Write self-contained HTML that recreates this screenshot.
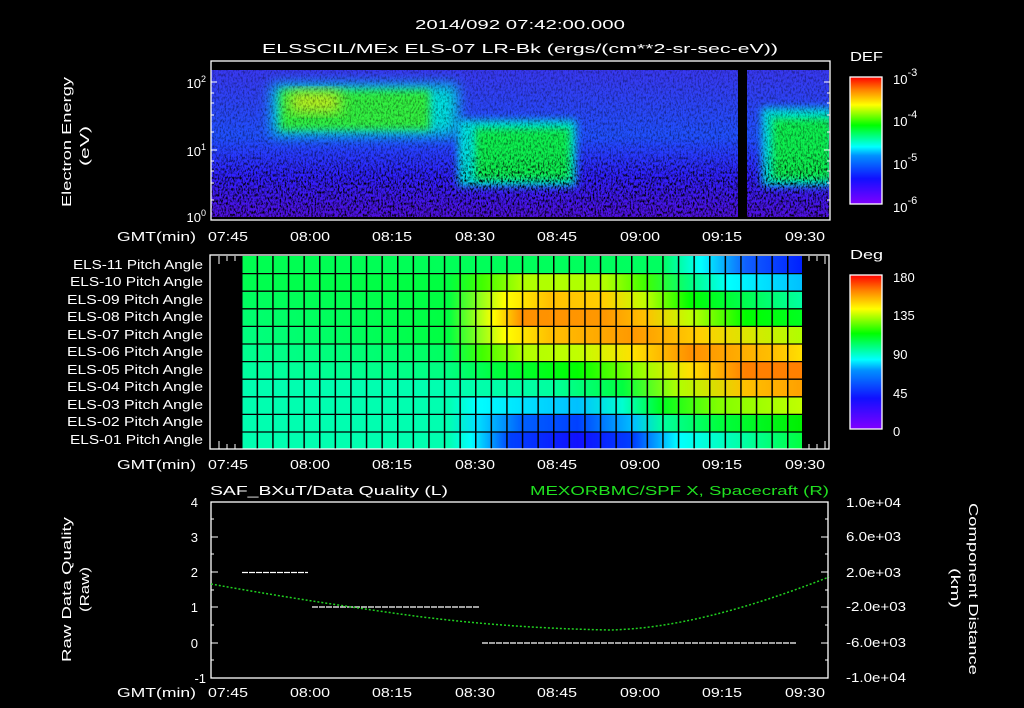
<!DOCTYPE html>
<html><head><meta charset="utf-8"><style>
html,body{margin:0;padding:0;background:#000;width:1024px;height:708px;overflow:hidden}
svg{display:block}
text{font-family:"Liberation Sans",sans-serif;fill:#fff;font-size:13px}
</style></head><body>
<svg width="1024" height="708" viewBox="0 0 1024 708" xmlns="http://www.w3.org/2000/svg">
<defs>
<linearGradient id="rb" x1="0" y1="1" x2="0" y2="0">
<stop offset="0" stop-color="#8000ff"/><stop offset="0.2" stop-color="#1010ff"/><stop offset="0.38" stop-color="#0090ff"/><stop offset="0.45" stop-color="#00ffff"/><stop offset="0.62" stop-color="#00ff00"/><stop offset="0.78" stop-color="#ffff00"/><stop offset="0.9" stop-color="#ff8000"/><stop offset="1" stop-color="#ff0000"/>
</linearGradient>
<linearGradient id="r1"><stop offset="0" stop-color="#00ff50"/><stop offset=".75" stop-color="#00ff60"/><stop offset=".82" stop-color="#00ffff"/><stop offset=".9" stop-color="#1060ff"/><stop offset="1" stop-color="#0020ff"/></linearGradient>
<linearGradient id="r2"><stop offset="0" stop-color="#00ff50"/><stop offset=".37" stop-color="#00ff40"/><stop offset=".43" stop-color="#40ff00"/><stop offset=".5" stop-color="#b0ff00"/><stop offset=".65" stop-color="#b0ff00"/><stop offset=".72" stop-color="#40ff00"/><stop offset=".8" stop-color="#00ff80"/><stop offset=".87" stop-color="#00ffff"/><stop offset="1" stop-color="#00c0ff"/></linearGradient>
<linearGradient id="r3"><stop offset="0" stop-color="#00ff60"/><stop offset=".37" stop-color="#00ff40"/><stop offset=".47" stop-color="#ffff00"/><stop offset=".55" stop-color="#ffc000"/><stop offset=".65" stop-color="#ffd000"/><stop offset=".72" stop-color="#c0ff00"/><stop offset=".8" stop-color="#00ff00"/><stop offset="1" stop-color="#00ffa0"/></linearGradient>
<linearGradient id="r4"><stop offset="0" stop-color="#00ff70"/><stop offset=".37" stop-color="#00ff40"/><stop offset=".45" stop-color="#ffff00"/><stop offset=".5" stop-color="#ff9000"/><stop offset=".65" stop-color="#ff9800"/><stop offset=".72" stop-color="#ffc000"/><stop offset=".8" stop-color="#c0ff00"/><stop offset=".9" stop-color="#00ff00"/><stop offset="1" stop-color="#00ff20"/></linearGradient>
<linearGradient id="r5"><stop offset="0" stop-color="#00ff80"/><stop offset=".37" stop-color="#00ff40"/><stop offset=".47" stop-color="#ffff00"/><stop offset=".55" stop-color="#ffc000"/><stop offset=".7" stop-color="#ff9800"/><stop offset=".82" stop-color="#ffd000"/><stop offset="1" stop-color="#b0ff00"/></linearGradient>
<linearGradient id="r6"><stop offset="0" stop-color="#00ff90"/><stop offset=".37" stop-color="#00ff60"/><stop offset=".43" stop-color="#40ff00"/><stop offset=".5" stop-color="#b0ff00"/><stop offset=".6" stop-color="#c0ff00"/><stop offset=".7" stop-color="#ffe000"/><stop offset=".8" stop-color="#ff9000"/><stop offset=".95" stop-color="#ffc000"/><stop offset="1" stop-color="#ffe000"/></linearGradient>
<linearGradient id="r7"><stop offset="0" stop-color="#00ffa0"/><stop offset=".37" stop-color="#00ff80"/><stop offset=".45" stop-color="#00ff40"/><stop offset=".6" stop-color="#00ff00"/><stop offset=".72" stop-color="#a0ff00"/><stop offset=".8" stop-color="#ffe000"/><stop offset=".9" stop-color="#ff8000"/><stop offset="1" stop-color="#ff8000"/></linearGradient>
<linearGradient id="r8"><stop offset="0" stop-color="#00ffb0"/><stop offset=".37" stop-color="#00ffb0"/><stop offset=".55" stop-color="#00ffa0"/><stop offset=".68" stop-color="#00ff40"/><stop offset=".78" stop-color="#b0ff00"/><stop offset=".9" stop-color="#ffc000"/><stop offset="1" stop-color="#ffa000"/></linearGradient>
<linearGradient id="r9"><stop offset="0" stop-color="#00ffb0"/><stop offset=".37" stop-color="#00ffb0"/><stop offset=".42" stop-color="#00ffff"/><stop offset=".6" stop-color="#00c0ff"/><stop offset=".68" stop-color="#00ffd0"/><stop offset=".75" stop-color="#00ff20"/><stop offset=".85" stop-color="#80ff00"/><stop offset="1" stop-color="#c0ff00"/></linearGradient>
<linearGradient id="r10"><stop offset="0" stop-color="#00ffb0"/><stop offset=".37" stop-color="#00ffb0"/><stop offset=".42" stop-color="#00e0ff"/><stop offset=".5" stop-color="#0060ff"/><stop offset=".6" stop-color="#0040ff"/><stop offset=".7" stop-color="#00c0ff"/><stop offset=".75" stop-color="#00ffa0"/><stop offset=".85" stop-color="#00ff40"/><stop offset="1" stop-color="#00f000"/></linearGradient>
<linearGradient id="r11"><stop offset="0" stop-color="#00ffb0"/><stop offset=".37" stop-color="#00ffb0"/><stop offset=".41" stop-color="#00ffff"/><stop offset=".48" stop-color="#0040ff"/><stop offset=".6" stop-color="#1010ff"/><stop offset=".7" stop-color="#0040ff"/><stop offset=".78" stop-color="#00ffff"/><stop offset=".9" stop-color="#00ffa0"/><stop offset="1" stop-color="#00ff40"/></linearGradient>
<pattern id="vl" x="241" y="0" width="15.6" height="10" patternUnits="userSpaceOnUse"><rect x="0" y="0" width="1.5" height="10" fill="#000"/></pattern>
<linearGradient id="sbg" x1="0" y1="0" x2="0" y2="1"><stop offset="0" stop-color="#3838f0"/><stop offset=".45" stop-color="#2050ff"/><stop offset=".72" stop-color="#3020ff"/><stop offset="1" stop-color="#5010e0"/></linearGradient>
<filter id="bl" x="-30%" y="-30%" width="160%" height="160%"><feGaussianBlur stdDeviation="7"/></filter>
<filter id="bl2" x="-30%" y="-30%" width="160%" height="160%"><feGaussianBlur stdDeviation="4"/></filter>
<filter id="spk" x="0" y="0" width="100%" height="100%">
<feTurbulence type="fractalNoise" baseFrequency="0.6 0.35" numOctaves="2" seed="4"/>
<feColorMatrix type="matrix" values="0 0 0 0 0  0 0 0 0 0  0 0 0 0 0  3 0 0 0 -1.3"/>
</filter>
<linearGradient id="mk" x1="0" y1="0" x2="0" y2="1"><stop offset="0" stop-color="#fff" stop-opacity=".35"/><stop offset=".55" stop-color="#fff" stop-opacity=".45"/><stop offset=".75" stop-color="#fff" stop-opacity="1"/><stop offset="1" stop-color="#fff" stop-opacity="1"/></linearGradient>
<mask id="m1"><rect x="211" y="70" width="618" height="147" fill="url(#mk)"/></mask>
<clipPath id="c1"><rect x="211" y="70" width="618" height="147"/></clipPath>
</defs>

<text x="415" y="29" font-size="16" textLength="210" lengthAdjust="spacingAndGlyphs">2014/092 07:42:00.000</text>
<text x="262" y="53" font-size="16" textLength="516" lengthAdjust="spacingAndGlyphs">ELSSCIL/MEx ELS-07 LR-Bk  (ergs/(cm**2-sr-sec-eV))</text>

<g clip-path="url(#c1)">
<rect x="211" y="70" width="618" height="147" fill="url(#sbg)"/>
<rect x="272" y="85" width="185" height="50" fill="#00e0e0" filter="url(#bl)"/>
<rect x="280" y="90" width="150" height="40" fill="#30f040" filter="url(#bl2)"/>
<rect x="290" y="92" width="50" height="20" fill="#c0f020" filter="url(#bl)"/>
<rect x="458" y="120" width="118" height="66" fill="#00e0e0" filter="url(#bl2)"/>
<rect x="475" y="128" width="95" height="52" fill="#10f050" filter="url(#bl2)"/>
<rect x="762" y="108" width="70" height="78" fill="#00e0e0" filter="url(#bl2)"/>
<rect x="772" y="118" width="60" height="62" fill="#10f050" filter="url(#bl2)"/>
<rect x="211" y="70" width="618" height="147" filter="url(#spk)" mask="url(#m1)"/>
<rect x="738" y="70" width="9" height="147" fill="#000"/>
</g>
<rect x="211" y="61" width="619" height="159" fill="none" stroke="#fff" stroke-width="1.3"/>
<g stroke="#fff" stroke-width="1">
<path d="M211 82h6M211 93h3M211 103h3M211 115h3M211 132h3M211 150h6M211 161h3M211 171h3M211 183h3M211 200h3M830 82h-6M830 93h-3M830 103h-3M830 115h-3M830 132h-3M830 150h-6M830 161h-3M830 171h-3M830 183h-3M830 200h-3"/>
</g>
<text x="206" y="88" text-anchor="end">10<tspan dy="-6" font-size="9">2</tspan></text>
<text x="206" y="156" text-anchor="end">10<tspan dy="-6" font-size="9">1</tspan></text>
<text x="206" y="222" text-anchor="end">10<tspan dy="-6" font-size="9">0</tspan></text>
<text transform="translate(71,207) rotate(-90)" font-size="15" textLength="130" lengthAdjust="spacingAndGlyphs">Electron Energy</text>
<text transform="translate(89,166) rotate(-90)" font-size="15" textLength="40" lengthAdjust="spacingAndGlyphs">(eV)</text>
<rect x="850" y="77" width="32" height="127" fill="url(#rb)" stroke="#fff" stroke-width="1.3"/>
<text x="850" y="61" font-size="17" textLength="33" lengthAdjust="spacingAndGlyphs">DEF</text>
<text x="893" y="84" font-size="17">10<tspan dy="-8" font-size="11">-3</tspan></text>
<text x="893" y="126" font-size="17">10<tspan dy="-8" font-size="11">-4</tspan></text>
<text x="893" y="169" font-size="17">10<tspan dy="-8" font-size="11">-5</tspan></text>
<text x="893" y="212" font-size="17">10<tspan dy="-8" font-size="11">-6</tspan></text>
<g font-size="14">
<text x="117" y="241" textLength="79" lengthAdjust="spacingAndGlyphs">GMT(min)</text>
<text x="208" y="241" textLength="40" lengthAdjust="spacingAndGlyphs">07:45</text><text x="290" y="241" textLength="40" lengthAdjust="spacingAndGlyphs">08:00</text><text x="372" y="241" textLength="40" lengthAdjust="spacingAndGlyphs">08:15</text><text x="455" y="241" textLength="40" lengthAdjust="spacingAndGlyphs">08:30</text><text x="537" y="241" textLength="40" lengthAdjust="spacingAndGlyphs">08:45</text><text x="620" y="241" textLength="40" lengthAdjust="spacingAndGlyphs">09:00</text><text x="702" y="241" textLength="40" lengthAdjust="spacingAndGlyphs">09:15</text><text x="785" y="241" textLength="40" lengthAdjust="spacingAndGlyphs">09:30</text>
</g>

<rect x="241" y="256" width="561" height="17.6" fill="url(#r1)"/>
<rect x="241" y="273.6" width="561" height="17.6" fill="url(#r2)"/>
<rect x="241" y="291.2" width="561" height="17.6" fill="url(#r3)"/>
<rect x="241" y="308.8" width="561" height="17.6" fill="url(#r4)"/>
<rect x="241" y="326.4" width="561" height="17.6" fill="url(#r5)"/>
<rect x="241" y="344" width="561" height="17.6" fill="url(#r6)"/>
<rect x="241" y="361.6" width="561" height="17.6" fill="url(#r7)"/>
<rect x="241" y="379.2" width="561" height="17.6" fill="url(#r8)"/>
<rect x="241" y="396.8" width="561" height="17.6" fill="url(#r9)"/>
<rect x="241" y="414.4" width="561" height="17.6" fill="url(#r10)"/>
<rect x="241" y="432" width="561" height="17" fill="url(#r11)"/>
<rect x="241" y="256" width="561" height="193" fill="url(#vl)"/>
<g stroke="#000" stroke-width="1.3">
<path d="M241 273.6h561M241 291.2h561M241 308.8h561M241 326.4h561M241 344h561M241 361.6h561M241 379.2h561M241 396.8h561M241 414.4h561M241 432h561"/>
</g>
<g stroke="#fff" stroke-width="1">
<path d="M219 256v8M227 256v5M235 256v5M219 449v-8M227 449v-5M235 449v-5M809 256v5M817 256v5M825 256v8M809 449v-5M817 449v-5M825 449v-8"/>
</g>
<rect x="210" y="255" width="619" height="194" fill="none" stroke="#fff" stroke-width="1.3"/>
<g font-size="13">
<text x="73" y="269" textLength="130" lengthAdjust="spacingAndGlyphs">ELS-11 Pitch Angle</text>
<text x="70" y="286" textLength="133" lengthAdjust="spacingAndGlyphs">ELS-10 Pitch Angle</text>
<text x="67" y="304" textLength="136" lengthAdjust="spacingAndGlyphs">ELS-09 Pitch Angle</text>
<text x="67" y="321" textLength="136" lengthAdjust="spacingAndGlyphs">ELS-08 Pitch Angle</text>
<text x="67" y="339" textLength="136" lengthAdjust="spacingAndGlyphs">ELS-07 Pitch Angle</text>
<text x="67" y="356" textLength="136" lengthAdjust="spacingAndGlyphs">ELS-06 Pitch Angle</text>
<text x="67" y="374" textLength="136" lengthAdjust="spacingAndGlyphs">ELS-05 Pitch Angle</text>
<text x="67" y="391" textLength="136" lengthAdjust="spacingAndGlyphs">ELS-04 Pitch Angle</text>
<text x="67" y="409" textLength="136" lengthAdjust="spacingAndGlyphs">ELS-03 Pitch Angle</text>
<text x="67" y="426" textLength="136" lengthAdjust="spacingAndGlyphs">ELS-02 Pitch Angle</text>
<text x="70" y="444" textLength="133" lengthAdjust="spacingAndGlyphs">ELS-01 Pitch Angle</text>
</g>
<rect x="850" y="275" width="32" height="154" fill="url(#rb)" stroke="#fff" stroke-width="1.3"/>
<text x="850" y="259" font-size="17" textLength="33" lengthAdjust="spacingAndGlyphs">Deg</text>
<text x="893" y="282" font-size="17">180</text>
<text x="893" y="320" font-size="17">135</text>
<text x="893" y="359" font-size="17">90</text>
<text x="893" y="398" font-size="17">45</text>
<text x="893" y="436" font-size="17">0</text>
<g font-size="14">
<text x="117" y="469" textLength="79" lengthAdjust="spacingAndGlyphs">GMT(min)</text>
<text x="208" y="469" textLength="40" lengthAdjust="spacingAndGlyphs">07:45</text><text x="290" y="469" textLength="40" lengthAdjust="spacingAndGlyphs">08:00</text><text x="372" y="469" textLength="40" lengthAdjust="spacingAndGlyphs">08:15</text><text x="455" y="469" textLength="40" lengthAdjust="spacingAndGlyphs">08:30</text><text x="537" y="469" textLength="40" lengthAdjust="spacingAndGlyphs">08:45</text><text x="620" y="469" textLength="40" lengthAdjust="spacingAndGlyphs">09:00</text><text x="702" y="469" textLength="40" lengthAdjust="spacingAndGlyphs">09:15</text><text x="785" y="469" textLength="40" lengthAdjust="spacingAndGlyphs">09:30</text>
</g>

<text x="210" y="495" font-size="17" textLength="238" lengthAdjust="spacingAndGlyphs">SAF_BXuT/Data Quality (L)</text>
<text x="530" y="495" font-size="17" textLength="299" lengthAdjust="spacingAndGlyphs" style="fill:#20e020">MEXORBMC/SPF X, Spacecraft (R)</text>
<rect x="211" y="502" width="617" height="176" fill="none" stroke="#fff" stroke-width="1.3"/>
<g stroke="#fff" stroke-width="1">
<path d="M211 502h7M211 537h7M211 572h7M211 607h7M211 643h7M211 519h3M211 554h3M211 590h3M211 625h3M211 660h3M828 502h-7M828 537h-7M828 572h-7M828 607h-7M828 643h-7M828 519h-3M828 554h-3M828 590h-3M828 625h-3M828 660h-3"/>
</g>
<g text-anchor="end" font-size="15">
<text x="198" y="507">4</text><text x="198" y="542">3</text><text x="198" y="577">2</text><text x="198" y="612">1</text><text x="198" y="648">0</text><text x="206" y="683">-1</text>
</g>
<g font-size="13">
<text x="846" y="507" textLength="55" lengthAdjust="spacingAndGlyphs">1.0e+04</text><text x="846" y="541" textLength="55" lengthAdjust="spacingAndGlyphs">6.0e+03</text><text x="846" y="577" textLength="55" lengthAdjust="spacingAndGlyphs">2.0e+03</text><text x="846" y="611" textLength="60" lengthAdjust="spacingAndGlyphs">-2.0e+03</text><text x="846" y="647" textLength="60" lengthAdjust="spacingAndGlyphs">-6.0e+03</text><text x="846" y="682" textLength="60" lengthAdjust="spacingAndGlyphs">-1.0e+04</text>
</g>
<text transform="translate(71,662) rotate(-90)" font-size="15" textLength="145" lengthAdjust="spacingAndGlyphs">Raw Data Quality</text>
<text transform="translate(89,612) rotate(-90)" font-size="15" textLength="45" lengthAdjust="spacingAndGlyphs">(Raw)</text>
<text transform="translate(969,503) rotate(90)" font-size="15" textLength="172" lengthAdjust="spacingAndGlyphs">Component Distance</text>
<text transform="translate(951,568) rotate(90)" font-size="15" textLength="40" lengthAdjust="spacingAndGlyphs">(km)</text>
<g stroke="#fff" stroke-width="1.2" stroke-dasharray="6 1">
<path d="M242 572.5h66M312 607h168M482 643h315"/>
</g>
<path d="M211 584 Q300 600 400 614 T610 630 Q700 628 829 577" fill="none" stroke="#20d020" stroke-width="1.5" stroke-dasharray="2 2"/>
<g font-size="14">
<text x="117" y="697" textLength="79" lengthAdjust="spacingAndGlyphs">GMT(min)</text>
<text x="208" y="697" textLength="40" lengthAdjust="spacingAndGlyphs">07:45</text><text x="290" y="697" textLength="40" lengthAdjust="spacingAndGlyphs">08:00</text><text x="372" y="697" textLength="40" lengthAdjust="spacingAndGlyphs">08:15</text><text x="455" y="697" textLength="40" lengthAdjust="spacingAndGlyphs">08:30</text><text x="537" y="697" textLength="40" lengthAdjust="spacingAndGlyphs">08:45</text><text x="620" y="697" textLength="40" lengthAdjust="spacingAndGlyphs">09:00</text><text x="702" y="697" textLength="40" lengthAdjust="spacingAndGlyphs">09:15</text><text x="785" y="697" textLength="40" lengthAdjust="spacingAndGlyphs">09:30</text>
</g>
</svg>
</body></html>
